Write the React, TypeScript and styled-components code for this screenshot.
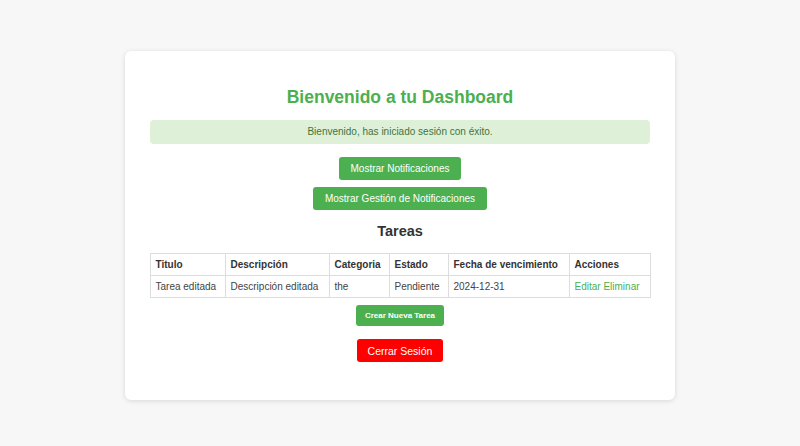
import React from "react";
import styled, { createGlobalStyle } from "styled-components";

const Global = createGlobalStyle`
  html, body { margin: 0; padding: 0; }
  body {
    background: #f7f7f7;
    font-family: "Liberation Sans", Arial, sans-serif;
  }
`;

const Page = styled.div`
  display: flex;
  justify-content: center;
  padding-top: 51px;
  min-height: 446px;
  box-sizing: border-box;
`;

const Card = styled.div`
  width: 550px;
  height: 349px;
  box-sizing: border-box;
  background: #fff;
  border-radius: 6px;
  box-shadow: 0 1px 5px rgba(0, 0, 0, 0.13);
  padding: 36px 25px 0;
  display: flex;
  flex-direction: column;
  align-items: center;
`;

const Title = styled.h2`
  margin: 0 0 12px;
  font-size: 17.5px;
  line-height: 21px;
  font-weight: bold;
  color: #4caf50;
`;

const Alert = styled.div`
  align-self: stretch;
  height: 24px;
  line-height: 24px;
  background: #dff0d8;
  color: #3c763d;
  border-radius: 4px;
  font-size: 10px;
  text-align: center;
  margin-bottom: 13px;
`;

const Button = styled.button<{ $variant?: "green" | "red" | "small"; $gap?: number }>`
  border: none;
  border-radius: 3px;
  color: #fff;
  font-family: "Liberation Sans", Arial, sans-serif;
  cursor: pointer;
  background: ${(p) => (p.$variant === "red" ? "#ff0000" : "#4caf50")};
  height: ${(p) => (p.$variant === "small" ? "21px" : "23px")};
  padding: ${(p) => (p.$variant === "small" ? "0 9px" : p.$variant === "red" ? "0 11px" : "0 12px")};
  font-size: ${(p) => (p.$variant === "small" ? "8px" : p.$variant === "red" ? "10.5px" : "10px")};
  font-weight: ${(p) => (p.$variant === "small" ? "bold" : "normal")};
  margin-bottom: ${(p) => p.$gap ?? 0}px;
`;

const Subtitle = styled.h3`
  margin: 0 0 12px;
  font-size: 14.5px;
  line-height: 19px;
  font-weight: bold;
  color: #333;
`;

const Table = styled.table`
  width: 500px;
  border-collapse: collapse;
  table-layout: fixed;
  font-size: 10px;
  margin-bottom: 7px;
`;

const Col = styled.col<{ $w: number }>`
  width: ${(p) => p.$w}px;
`;

const Th = styled.th`
  border: 1px solid #ddd;
  height: 21px;
  padding: 0 5px;
  text-align: left;
  font-weight: bold;
  color: #333;
  white-space: nowrap;
`;

const Td = styled.td`
  border: 1px solid #ddd;
  height: 21px;
  padding: 0 5px;
  text-align: left;
  color: #444;
  white-space: nowrap;
`;

const Link = styled.a`
  color: #4caf50;
  text-decoration: none;
`;

const cols = [75, 104, 60, 59, 121, 81];
const headers = ["Titulo", "Descripción", "Categoria", "Estado", "Fecha de vencimiento", "Acciones"];

export default function App() {
  return (
    <>
      <Global />
      <Page>
        <Card>
          <Title>Bienvenido a tu Dashboard</Title>
          <Alert>Bienvenido, has iniciado sesión con éxito.</Alert>
          <Button $gap={7}>Mostrar Notificaciones</Button>
          <Button $gap={12}>Mostrar Gestión de Notificaciones</Button>
          <Subtitle>Tareas</Subtitle>
          <Table>
            <colgroup>
              {cols.map((w, i) => (
                <Col key={i} $w={w} />
              ))}
            </colgroup>
            <thead>
              <tr>
                {headers.map((h) => (
                  <Th key={h}>{h}</Th>
                ))}
              </tr>
            </thead>
            <tbody>
              <tr>
                <Td>Tarea editada</Td>
                <Td>Descripción editada</Td>
                <Td>the</Td>
                <Td>Pendiente</Td>
                <Td>2024-12-31</Td>
                <Td>
                  <Link href="#">Editar</Link> <Link href="#">Eliminar</Link>
                </Td>
              </tr>
            </tbody>
          </Table>
          <Button $variant="small" $gap={13}>Crear Nueva Tarea</Button>
          <Button $variant="red">Cerrar Sesión</Button>
        </Card>
      </Page>
    </>
  );
}
